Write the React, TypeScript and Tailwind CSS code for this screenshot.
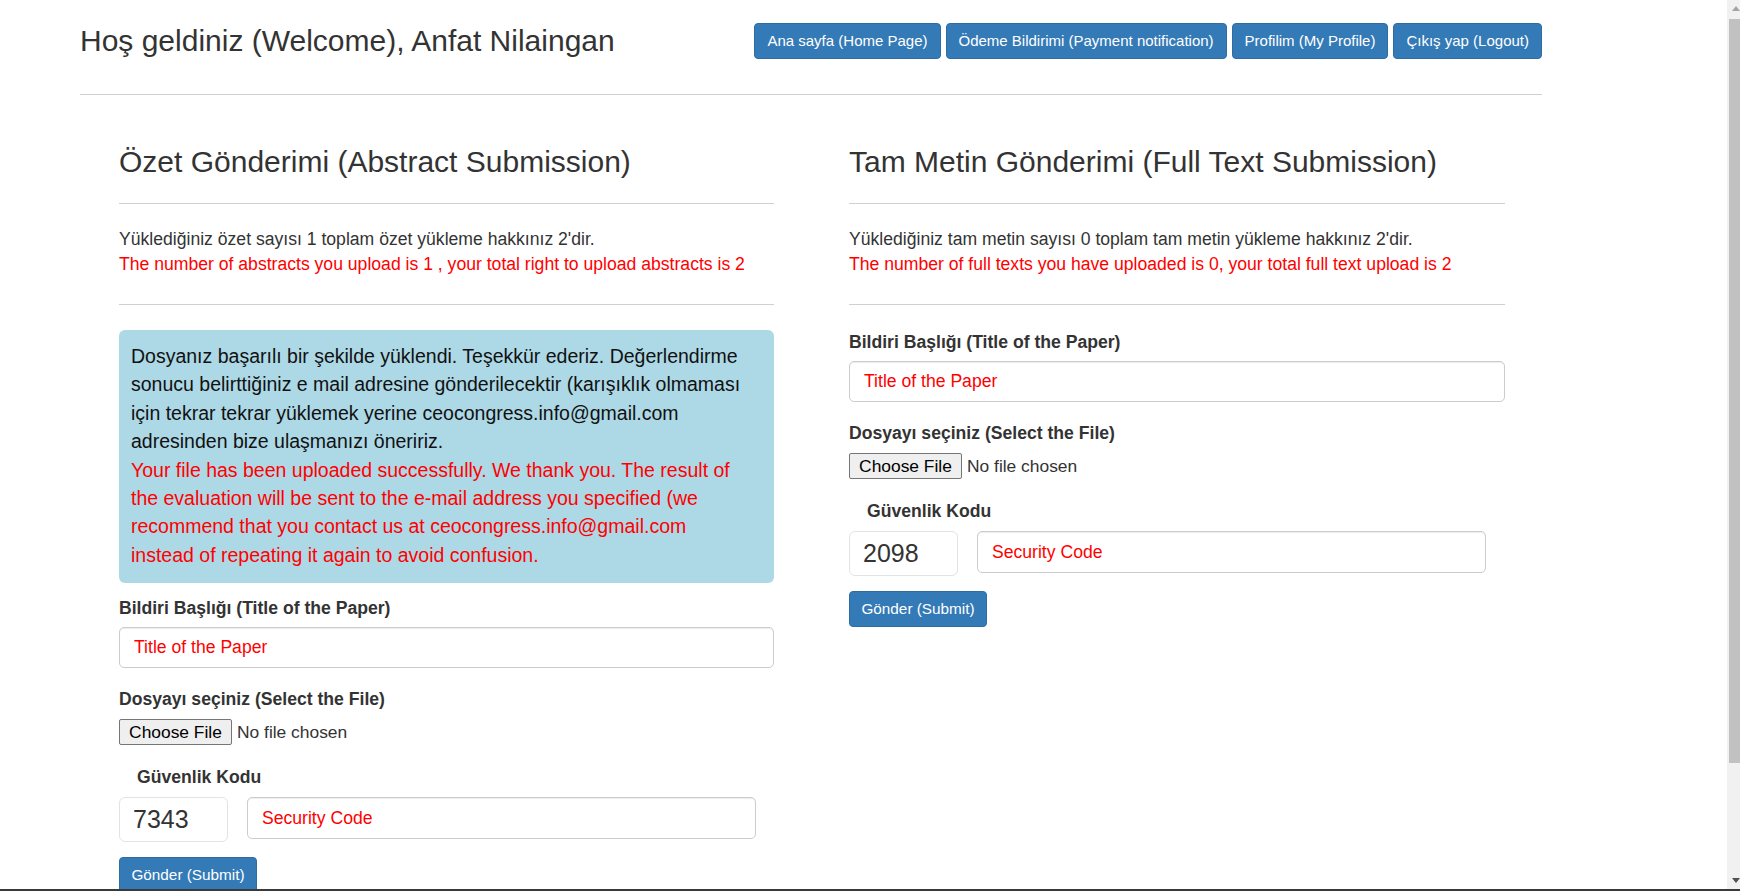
import React from "react";

const navLinks = [
  "Ana sayfa (Home Page)",
  "Ödeme Bildirimi (Payment notification)",
  "Profilim (My Profile)",
  "Çıkış yap (Logout)",
];

function Label({ children, indent = false }: { children: React.ReactNode; indent?: boolean }) {
  return (
    <label
      className={
        "block text-[17.6px] font-bold leading-[25px] text-[#333] " +
        (indent ? "pl-[18px]" : "")
      }
    >
      {children}
    </label>
  );
}

function FileField() {
  return (
    <div className="flex h-[26px] items-center">
      <span className="flex h-[26px] w-[113px] items-center justify-center rounded-[2px] border border-[#767676] bg-[#efefef] text-[17.4px] text-black">
        Choose File
      </span>
      <span className="ml-[5px] text-[17.4px] text-[#333]">No file chosen</span>
    </div>
  );
}

function SubmissionForm({ code }: { code: string }) {
  return (
    <div>
      <Label>Bildiri Başlığı (Title of the Paper)</Label>
      <input
        type="text"
        placeholder="Title of the Paper"
        className="mt-[6px] block h-[41px] w-full rounded-[5px] border border-[#ccc] px-[14px] text-[17.6px] shadow-[inset_0_1px_1px_rgba(0,0,0,0.075)] outline-none placeholder:text-[#f00]"
      />

      <div className="mt-[19px]">
        <Label>Dosyayı seçiniz (Select the File)</Label>
      </div>
      <div className="mt-[7px]">
        <FileField />
      </div>

      <div className="mt-[20px]">
        <Label indent>Güvenlik Kodu</Label>
      </div>
      <div className="mt-[7px] flex items-start gap-[19px]">
        <div className="flex h-[45px] w-[109px] items-center rounded-[6px] border border-[#e3e3e3] pl-[13px] text-[25px] text-[#333]">
          {code}
        </div>
        <input
          type="text"
          placeholder="Security Code"
          className="block h-[42px] w-[509px] rounded-[5px] border border-[#ccc] px-[14px] text-[17.6px] shadow-[inset_0_1px_1px_rgba(0,0,0,0.075)] outline-none placeholder:text-[#f00]"
        />
      </div>

      <button
        type="submit"
        className="mt-[15px] h-[36px] w-[138px] rounded-[4px] border border-[#2e6da4] bg-[#337ab7] text-[15.3px] text-white"
      >
        Gönder (Submit)
      </button>
    </div>
  );
}

function SectionHead({ title, tr, en }: { title: string; tr: string; en: string }) {
  return (
    <>
      <h2 className="text-[30px] leading-[33px] font-normal text-[#333]">{title}</h2>
      <hr className="mt-[25px] border-t border-[#d0d0d0]" />
      <div className="mt-[23px] text-[17.6px] leading-[25px]">
        <p className="text-[#333]">{tr}</p>
        <p className="text-[#f00]">{en}</p>
      </div>
      <hr className="mt-[27px] border-t border-[#d0d0d0]" />
    </>
  );
}

function Scrollbar() {
  return (
    <div className="flex w-[13px] shrink-0 flex-col bg-[#f1f1f1]">
      <div className="flex h-[17px] items-center pl-[5px]">
        <div className="h-0 w-0 border-x-[4px] border-b-[5px] border-x-transparent border-b-[#a3a3a3]" />
      </div>
      <div className="ml-[2px] mt-[2px] h-[744px] bg-[#c1c1c1]" />
      <div className="flex-1" />
      <div className="flex h-[17px] items-center pl-[5px]">
        <div className="h-0 w-0 border-x-[4px] border-t-[5px] border-x-transparent border-t-[#505050]" />
      </div>
    </div>
  );
}

export default function App() {
  return (
    <div className="flex h-[891px] w-full flex-col overflow-hidden bg-white font-['Liberation_Sans',Arial,sans-serif] text-[#333]">
      <div className="flex min-h-0 flex-1">
        <main className="min-w-0 flex-1">
          <div className="ml-[80px] w-[1462px] pt-[23px]">
            <header className="flex h-[36px] items-center justify-between">
              <h1 className="text-[30px] leading-[36px] font-normal text-[#333]">
                Hoş geldiniz (Welcome), Anfat Nilaingan
              </h1>
              <nav className="flex gap-[5px]">
                {navLinks.map((link) => (
                  <a
                    key={link}
                    href="#"
                    className="flex h-[36px] items-center rounded-[4px] border border-[#2e6da4] bg-[#337ab7] px-[12px] text-[15px] text-white"
                  >
                    {link}
                  </a>
                ))}
              </nav>
            </header>
            <hr className="mt-[35px] border-t border-[#cfcfcf]" />

            <div className="ml-[39px] mt-[50px] flex gap-[75px]">
              {/* abstract */}
              <section className="w-[655px]">
                <SectionHead
                  title="Özet Gönderimi (Abstract Submission)"
                  tr="Yüklediğiniz özet sayısı 1 toplam özet yükleme hakkınız 2'dir."
                  en="The number of abstracts you upload is 1 , your total right to upload abstracts is 2"
                />
                <div className="mt-[25px] rounded-[6px] bg-[#add8e6] px-[12px] pt-[12px] pb-[14px] text-[19.5px] leading-[28.4px]">
                  <p className="whitespace-nowrap text-[#111]">
                    Dosyanız başarılı bir şekilde yüklendi. Teşekkür ederiz. Değerlendirme
                    <br />
                    sonucu belirttiğiniz e mail adresine gönderilecektir (karışıklık olmaması
                    <br />
                    için tekrar tekrar yüklemek yerine ceocongress.info@gmail.com
                    <br />
                    adresinden bize ulaşmanızı öneririz.
                  </p>
                  <p className="whitespace-nowrap text-[#f00]">
                    Your file has been uploaded successfully. We thank you. The result of
                    <br />
                    the evaluation will be sent to the e-mail address you specified (we
                    <br />
                    recommend that you contact us at ceocongress.info@gmail.com
                    <br />
                    instead of repeating it again to avoid confusion.
                  </p>
                </div>
                <div className="mt-[13px]">
                  <SubmissionForm code="7343" />
                </div>
              </section>

              {/* full text */}
              <section className="w-[656px]">
                <SectionHead
                  title="Tam Metin Gönderimi (Full Text Submission)"
                  tr="Yüklediğiniz tam metin sayısı 0 toplam tam metin yükleme hakkınız 2'dir."
                  en="The number of full texts you have uploaded is 0, your total full text upload is 2"
                />
                <div className="mt-[25px]">
                  <SubmissionForm code="2098" />
                </div>
              </section>
            </div>
          </div>
        </main>
        <Scrollbar />
      </div>
      <div className="h-[2px] shrink-0 bg-[#3a3a3a]" />
    </div>
  );
}
